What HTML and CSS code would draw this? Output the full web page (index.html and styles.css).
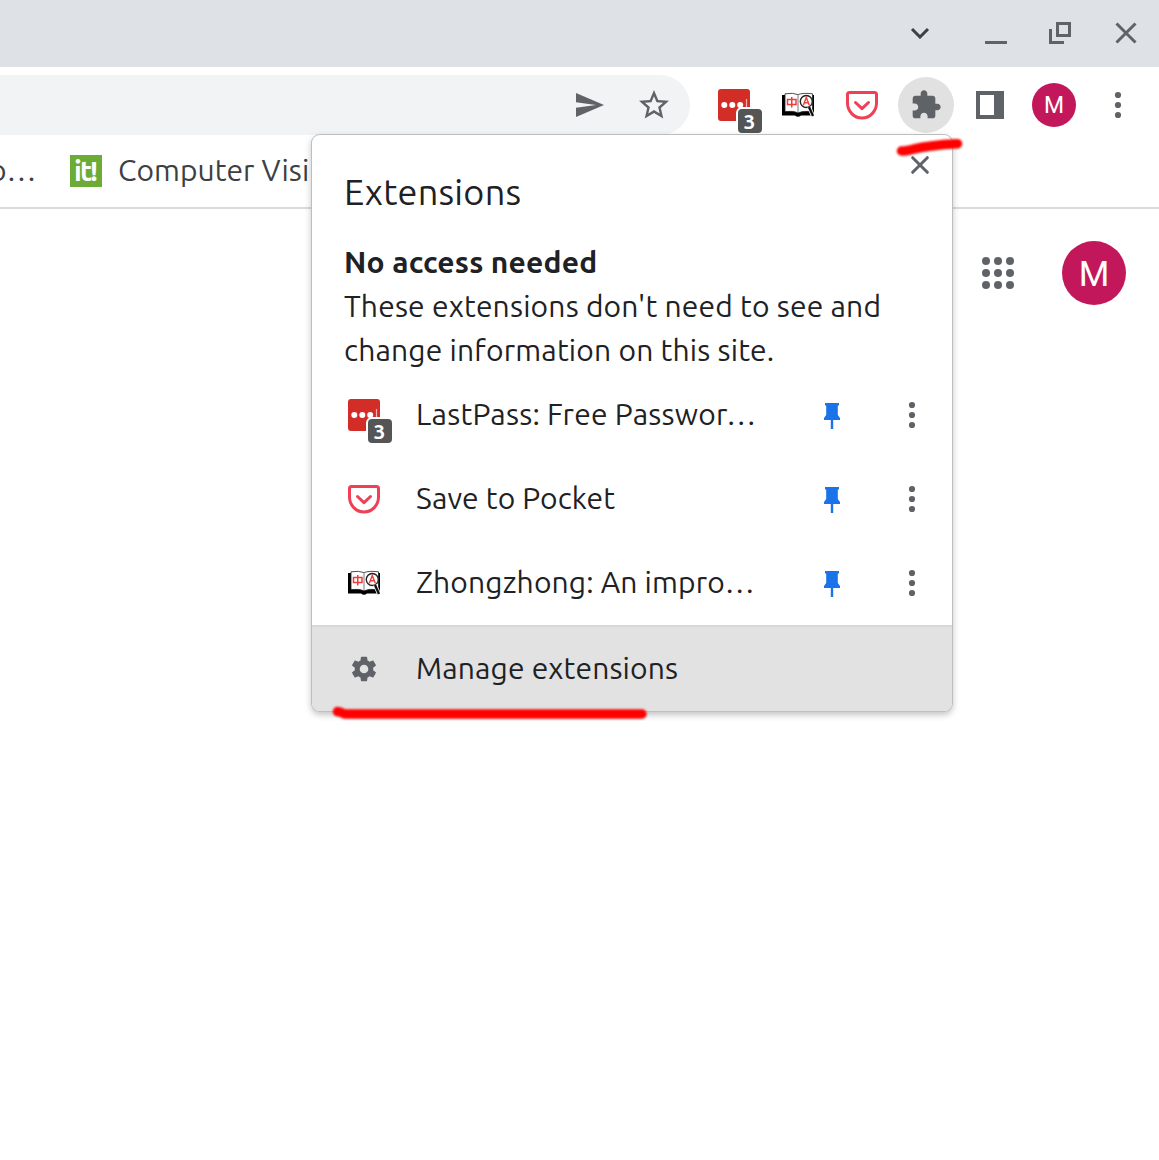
FILE: index.html
```html
<!DOCTYPE html>
<html lang="en">
<head>
<meta charset="utf-8">
<title>Extensions</title>
<link rel="stylesheet" href="styles.css">
</head>
<body>
<svg width="0" height="0" class="defs">
  <symbol id="lastpass" viewBox="0 0 32 32">
    <rect width="32" height="32" rx="3" fill="#d32d27"/>
    <circle cx="6.300" cy="16" r="3" fill="#fff"/><circle cx="14.300" cy="16" r="3" fill="#fff"/><circle cx="22.200" cy="16" r="3" fill="#fff"/>
    <path d="M28.500 10v12" stroke="#f3b5b2" stroke-width="1.200"/>
  </symbol>
  <symbol id="pocket" viewBox="0 0 32 32">
    <path d="M3.500 3.500h25q2 0 2 2v8.500a14.500 15 0 0 1-29 0V5.500q0-2 2-2z" fill="none" stroke="#ef4056" stroke-width="3"/>
    <path d="M9.500 13.500l6.500 6.200 6.500-6.200" fill="none" stroke="#ef4056" stroke-width="3" stroke-linecap="round" stroke-linejoin="round"/>
  </symbol>
  <symbol id="book" viewBox="0 0 32 32">
    <path d="M0 6h32v20.500H19q-3 2.400-6 0H0z" fill="#000"/>
    <path d="M3 4.800q8-1.300 13 .8 5-2 14.500-.8v17.700q-9-.8-14.500 1.200-5-2-13-1.200z" fill="#fff" stroke="#222" stroke-width=".8"/>
    <path d="M16 5.500v18" stroke="#999" stroke-width="1.300"/>
    <path d="M5.500 10.500h8.500v5H5.500zM9.750 8V18.500" fill="none" stroke="#ec3f3b" stroke-width="1.500"/>
    <circle cx="24.300" cy="12.500" r="6" fill="#fff" stroke="#222" stroke-width="1.400"/>
    <path d="M27 18l4 9" stroke="#fff" stroke-width="4"/>
    <path d="M27 18l4 9" stroke="#111" stroke-width="2.400"/>
    <path d="M21.300 16.300l3-7.800 3 7.800M22.300 13.800h4" fill="none" stroke="#ec3f3b" stroke-width="1.400"/>
  </symbol>
  <symbol id="dots" viewBox="0 0 8 28">
    <circle cx="4" cy="4" r="3.100"/><circle cx="4" cy="14" r="3.100"/><circle cx="4" cy="24" r="3.100"/>
  </symbol>
  <symbol id="pin" viewBox="0 0 16 26">
    <path d="M1 0h14v2.500h-1.200V12l2.200 3v2H9.200v9H6.800v-9H0v-2l2.200-3V2.500H1z"/>
  </symbol>
</svg>

<div class="window">
  <header class="titlebar">
    <svg class="chevron" width="20" height="12" viewBox="0 0 20 12"><path d="M2 2l8 8L18 2"/></svg>
    <svg class="minimize" width="22" height="22"><path d="M0 19.500h22"/></svg>
    <svg class="restore" width="22" height="22"><path d="M8.500 1.500h12v12h-12zM1.500 7v13.500H15"/></svg>
    <svg class="close" width="22" height="22"><path d="M1.500 1.500l19 19M20.500 1.500l-19 19"/></svg>
  </header>

  <div class="toolbar">
    <div class="omnibox">
      <svg width="28" height="24" viewBox="2 3 21 18" preserveAspectRatio="none"><path d="M2 21l21-9L2 3v7l15 2-15 2z"/></svg>
      <svg width="36" height="36" viewBox="0 0 24 24"><path d="M22 9.240l-7.190-.62L12 2 9.190 8.630 2 9.240l5.460 4.730L5.820 21 12 17.270 18.180 21l-1.630-7.030L22 9.240zM12 15.400l-3.760 2.270 1-4.280-3.320-2.880 4.380-.38L12 6.100l1.710 4.040 4.380.38-3.320 2.880 1 4.280L12 15.400z"/></svg>
    </div>
    <div class="actions">
      <span class="ext"><svg width="32" height="32"><use href="#lastpass"/></svg><b class="badge">3</b></span>
      <span class="ext"><svg width="32" height="32"><use href="#book"/></svg></span>
      <span class="ext"><svg width="32" height="32"><use href="#pocket"/></svg></span>
      <span class="puzzle"><svg width="32" height="32" viewBox="0 0 24 24"><path d="M20.500 11H19V7c0-1.100-.9-2-2-2h-4V3.500C13 2.120 11.880 1 10.500 1S8 2.120 8 3.500V5H4c-1.100 0-1.990.9-1.990 2v3.800H3.500c1.490 0 2.700 1.210 2.700 2.700s-1.210 2.700-2.700 2.700H2V20c0 1.100.9 2 2 2h3.800v-1.500c0-1.490 1.210-2.700 2.700-2.700 1.490 0 2.700 1.210 2.700 2.700V22H17c1.100 0 2-.9 2-2v-4h1.500c1.380 0 2.500-1.120 2.500-2.500S21.880 11 20.500 11z"/></svg></span>
      <span class="sidepanel"></span>
      <span class="avatar">M</span>
      <svg class="dots" width="8" height="28"><use href="#dots"/></svg>
    </div>
  </div>

  <div class="bookmarks">
    <span class="bookmark cut">o…</span>
    <span class="favicon">it!</span>
    <span class="bookmark name">Computer Visi</span>
  </div>

  <main class="page">
    <svg width="32" height="32" fill="#5f6368"><circle cx="4" cy="4" r="4"/><circle cx="16" cy="4" r="4"/><circle cx="28" cy="4" r="4"/><circle cx="4" cy="16" r="4"/><circle cx="16" cy="16" r="4"/><circle cx="28" cy="16" r="4"/><circle cx="4" cy="28" r="4"/><circle cx="16" cy="28" r="4"/><circle cx="28" cy="28" r="4"/></svg>
    <span class="avatar large">M</span>
  </main>

  <section class="popup">
    <svg class="popup-close" width="18" height="18"><path d="M1.700 1.700l14.600 14.600M16.300 1.700L1.700 16.300"/></svg>
    <h1>Extensions</h1>
    <h2>No access needed</h2>
    <p>These extensions don't need to see and<br>change information on this site.</p>
    <div class="row">
      <span class="ext"><svg width="32" height="32"><use href="#lastpass"/></svg><b class="badge">3</b></span>
      <span class="label wide">LastPass: Free Passwor…</span>
      <svg class="pin" width="16" height="26"><use href="#pin"/></svg>
      <svg class="dots" width="8" height="28"><use href="#dots"/></svg>
    </div>
    <div class="row">
      <span class="ext"><svg width="32" height="32"><use href="#pocket"/></svg></span>
      <span class="label">Save to Pocket</span>
      <svg class="pin" width="16" height="26"><use href="#pin"/></svg>
      <svg class="dots" width="8" height="28"><use href="#dots"/></svg>
    </div>
    <div class="row">
      <span class="ext"><svg width="32" height="32"><use href="#book"/></svg></span>
      <span class="label">Zhongzhong: An impro…</span>
      <svg class="pin" width="16" height="26"><use href="#pin"/></svg>
      <svg class="dots" width="8" height="28"><use href="#dots"/></svg>
    </div>
    <div class="manage">
      <svg width="32" height="32" viewBox="-1 -1 26 26"><path d="M19.430 12.980c.04-.32.07-.64.07-.98s-.03-.66-.07-.98l2.110-1.650c.19-.15.240-.42.120-.64l-2-3.460c-.12-.22-.39-.3-.61-.22l-2.490 1c-.52-.4-1.080-.73-1.690-.98l-.38-2.650C14.460 2.180 14.250 2 14 2h-4c-.25 0-.46.180-.49.420l-.38 2.650c-.61.250-1.170.590-1.690.980l-2.490-1c-.23-.09-.49 0-.61.220l-2 3.460c-.13.220-.07.490.12.640l2.110 1.650c-.04.320-.07.650-.07.980s.03.660.07.980l-2.110 1.650c-.19.150-.24.420-.12.640l2 3.460c.12.220.39.300.61.220l2.490-1c.52.400 1.080.730 1.690.980l.38 2.650c.03.240.24.420.49.420h4c.25 0 .46-.18.490-.42l.38-2.650c.61-.25 1.170-.59 1.690-.98l2.490 1c.23.090.49 0 .61-.22l2-3.460c.12-.22.07-.49-.12-.64l-2.110-1.650zM12 15.500a3.500 3.500 0 1 1 0-7 3.500 3.500 0 0 1 0 7z"/></svg>
      <span class="label">Manage extensions</span>
    </div>
  </section>

  <svg class="marks" width="1159" height="1160"><path d="M901.500 151q5 0 13-2.200 8-2 15-2.600 15-2.300 28-2.500"/><path d="M337.500 711.500q3 .2 7 2.500H642"/></svg>
</div>
</body>
</html>
```
FILE: styles.css
```css
* { box-sizing: border-box; }
body { margin: 0; font-family: Ubuntu, "Noto Sans", sans-serif; color: #202124; background: #fff; }
svg { display: block; flex: none; }
.defs { position: absolute; }
.window { position: relative; width: 1159px; height: 1160px; overflow: hidden; }

.titlebar { display: flex; justify-content: flex-end; align-items: center; height: 67px; padding: 0 22px 1px 0; background: #dee1e6; }
.titlebar path { fill: none; stroke: #5f6368; stroke-width: 3; }
.titlebar .chevron { margin-right: 55px; }
.titlebar .chevron path { stroke: #3c4043; stroke-width: 3; }
.minimize { margin-right: 42px; margin-top: 2px; }
.restore { margin-right: 44px; }

.toolbar { display: flex; height: 75px; padding-top: 8px; }
.omnibox { display: flex; align-items: center; justify-content: flex-end; gap: 32px; width: 690px; height: 60px; padding-right: 18px; border-radius: 0 30px 30px 0; background: #f1f3f4; fill: #5f6368; }
.actions { display: flex; align-items: center; height: 60px; padding-left: 28px; }
.ext { position: relative; flex: none; width: 32px; height: 32px; }
.actions .ext { margin-right: 32px; }
.actions .ext:nth-child(3) { margin-right: 20px; }
.badge { position: absolute; left: 20px; top: 20px; width: 24px; height: 24px; border-radius: 4px; background: #555; box-shadow: 0 0 0 2px #fff; color: #fff; font: bold 21px/25px Ubuntu, "Noto Sans", sans-serif; text-align: center; text-indent: -1px; }
.puzzle { display: flex; align-items: center; width: 56px; height: 56px; padding-left: 12px; border-radius: 50%; background: #e1e1e1; fill: #5f6368; }
.sidepanel { width: 28px; height: 28px; margin: 0 28px 0 22px; border: solid #5f6368; border-width: 4px 10px 4px 4px; }
.avatar { display: flex; align-items: center; justify-content: center; width: 44px; height: 44px; padding-top: 1px; border-radius: 50%; background: #c2185b; color: #fff; font: 400 23px/1 Roboto, sans-serif; }
.dots { fill: #5f6368; }
.actions .dots { margin-left: 38px; }

.bookmarks { display: flex; align-items: center; height: 67px; padding-bottom: 8px; border-bottom: 2px solid #d9dadc; color: #3c4043; font-size: 30px; letter-spacing: .05px; }
.bookmark { margin-top: -2px; white-space: nowrap; }
.cut { width: 70px; text-indent: -11px; }
.favicon { width: 32px; height: 32px; margin-right: 16px; background: #6dab37; color: #fff; font: bold 28px/32px "Ubuntu Condensed", Ubuntu, sans-serif; letter-spacing: -2px; text-align: center; text-indent: -2px; }

.page { display: flex; justify-content: flex-end; align-items: center; gap: 48px; height: 128px; padding-right: 33px; }
.avatar.large { width: 64px; height: 64px; padding-top: 2px; font-size: 35px; }

.popup { position: absolute; left: 312px; top: 135px; width: 640px; height: 576px; padding-top: 35px; border-radius: 8px; background: #fff; box-shadow: 0 0 0 1px #bcbec0, 0 3px 6px 1px rgba(60, 64, 67, .3); overflow: hidden; }
.popup-close { position: absolute; left: 599px; top: 21px; fill: none; stroke: #5f6368; stroke-width: 3; stroke-linecap: round; }
h1, h2, p { margin: 0 32px; line-height: 44px; white-space: nowrap; letter-spacing: .18px; }
h1 { margin-bottom: 26px; font-size: 36px; font-weight: 400; letter-spacing: .25px; }
h2 { font-size: 30px; font-weight: 700; letter-spacing: .2px; }
p { margin-bottom: 1px; font-size: 30px; }
.row { display: flex; align-items: center; height: 84px; padding: 0 36px; }
.label { width: 400px; margin: -2px 0 0 36px; font-size: 30px; letter-spacing: .13px; white-space: nowrap; }
.label.wide { letter-spacing: .22px; }
.pin { margin: 1px 0 0 8px; fill: #1a73e8; }
.row .dots { margin-left: 68px; }
.manage { display: flex; align-items: center; height: 86px; padding: 0 36px; border-top: 2px solid #d5d7da; background: #e2e2e2; fill: #5f6368; }

.marks { position: absolute; left: 0; top: 0; fill: none; stroke: #f00; stroke-width: 9.5; stroke-linecap: round; stroke-linejoin: round; filter: blur(.8px); pointer-events: none; }
```
